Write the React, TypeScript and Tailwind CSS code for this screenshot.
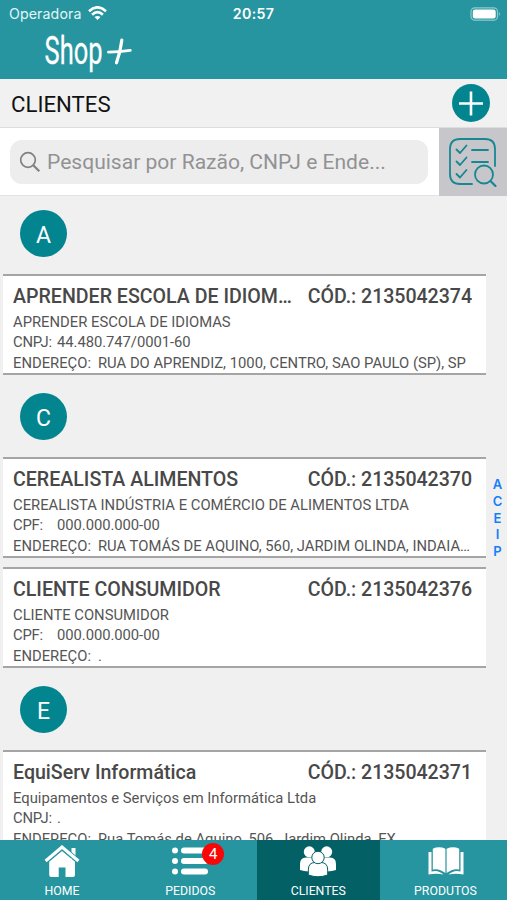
import React from "react";

type Client = {
  title: string;
  code: string;
  name: string;
  doc: string;
  docValue: string;
  address: string;
};

const aprender: Client = {
  title: "APRENDER ESCOLA DE IDIOM…",
  code: "2135042374",
  name: "APRENDER ESCOLA DE IDIOMAS",
  doc: "CNPJ:",
  docValue: "44.480.747/0001-60",
  address: "RUA DO APRENDIZ, 1000, CENTRO, SAO PAULO (SP), SP",
};
const cerealista: Client = {
  title: "CEREALISTA ALIMENTOS",
  code: "2135042370",
  name: "CEREALISTA INDÚSTRIA E COMÉRCIO DE ALIMENTOS LTDA",
  doc: "CPF:",
  docValue: "000.000.000-00",
  address: "RUA TOMÁS DE AQUINO, 560, JARDIM OLINDA, INDAIA…",
};
const consumidor: Client = {
  title: "CLIENTE CONSUMIDOR",
  code: "2135042376",
  name: "CLIENTE CONSUMIDOR",
  doc: "CPF:",
  docValue: "000.000.000-00",
  address: ".",
};
const equiserv: Client = {
  title: "EquiServ Informática",
  code: "2135042371",
  name: "Equipamentos e Serviços em Informática Ltda",
  doc: "CNPJ:",
  docValue: ".",
  address: "Rua Tomás de Aquino, 506, Jardim Olinda, EX",
};

function Card({ c }: { c: Client }) {
  return (
    <article className="ml-[3px] h-[101px] w-[483px] shrink-0 overflow-hidden border-y-2 border-[#a5a5a5] bg-white pl-[10px] pr-[14px] text-[#555]">
      <div className="mt-[7px] flex h-[27px] items-center justify-between text-[19.6px] font-medium leading-[27px] text-[#484848]">
        <h2 className="whitespace-nowrap">{c.title}</h2>
        <span className="whitespace-nowrap tracking-[-0.04px]">CÓD.: {c.code}</span>
      </div>
      <div className="mt-[2px] text-[14.8px]">
        <p className="whitespace-nowrap leading-[20px]">{c.name}</p>
        <p className="flex leading-[20px]">
          <span className="w-[44px] tracking-[-0.2px]">{c.doc}</span>
          <span className="tracking-[-0.05px]">{c.docValue}</span>
        </p>
        <p className="flex whitespace-nowrap leading-[23px]">
          <span className="w-[85px] shrink-0">ENDEREÇO:</span>
          <span>{c.address}</span>
        </p>
      </div>
    </article>
  );
}

function SectionHeader({ letter }: { letter: string }) {
  return (
    <div className="ml-[20px] flex size-[47px] shrink-0 items-center justify-center rounded-full bg-[#03858f] pt-[3px] text-[23px] leading-none text-white">
      {letter}
    </div>
  );
}

function HomeIcon() {
  return (
    <svg className="h-[32px] w-[36px]" viewBox="0 0 36 32">
      <path d="M27.5 3H31.5V14H27.5Z" fill="#fff" />
      <path d="M18 6L5.2 16.8V30Q5.2 32 7.2 32H14.7V22.5H21.5V32H29Q31 32 31 30V16.8Z" fill="#fff" />
      <path d="M1.6 16L18 2L34.4 16" fill="none" stroke="#2695a0" strokeWidth="4.8" />
      <path d="M1.6 16L18 2L34.4 16" fill="none" stroke="#fff" strokeWidth="3.1" />
    </svg>
  );
}

function OrdersIcon() {
  return (
    <svg className="h-[28px] w-[36px]" viewBox="0 0 36 28" fill="#fff">
      <circle cx="3" cy="3.5" r="3" />
      <circle cx="3" cy="14" r="3" />
      <circle cx="3" cy="24.5" r="3" />
      <rect x="9" y="0.5" width="27" height="6" rx="3" />
      <rect x="9" y="11" width="27" height="6" rx="3" />
      <rect x="9" y="21.5" width="27" height="6" rx="3" />
    </svg>
  );
}

function ClientsIcon() {
  return (
    <svg className="h-[31px] w-[36px]" viewBox="0 0 36 31" fill="#fff" stroke="#036166" strokeWidth="1">
      <g stroke="none">
        <circle cx="9.3" cy="5.8" r="5.5" />
        <circle cx="26.7" cy="5.8" r="5.5" />
        <path d="M0 24 V18 Q0 11.5 6 11.5 H12 L17 24.5 Q7 26.5 0 24Z" />
        <path d="M36 24 V18 Q36 11.5 30 11.5 H24 L19 24.5 Q29 26.5 36 24Z" />
      </g>
      <path d="M8.3 29 V24 Q8.3 16.5 15 16.5 H21 Q27.7 16.5 27.7 24 V29 Q18 32.5 8.3 29Z" />
      <circle cx="18" cy="11.5" r="6.2" />
    </svg>
  );
}

function ProductsIcon() {
  return (
    <svg className="h-[28px] w-[36px]" viewBox="0 0 36 28" fill="#fff">
      <path d="M4.8 1.7 Q11 -1 17.4 1.7 V26 Q11 21 4.8 22.5Z" />
      <path d="M31.2 1.7 Q25 -1 18.6 1.7 V26 Q25 21 31.2 22.5Z" />
      <path d="M.5 5 H3.5 V24.5 Q10 22.5 15.5 27.5 Q8 26 .5 27.5Z" />
      <path d="M35.5 5 H32.5 V24.5 Q26 22.5 20.5 27.5 Q28 26 35.5 27.5Z" />
    </svg>
  );
}

function Tab({ label, active, children }: { label: string; active?: boolean; children: React.ReactNode }) {
  return (
    <div className={`flex flex-col items-center text-white ${active ? "bg-[#036166]" : ""}`}>
      <div className="flex h-[43px] items-center pb-px">{children}</div>
      <span className="mt-px text-[12.3px] leading-[15px]">{label}</span>
    </div>
  );
}

export default function App() {
  return (
    <div className="flex h-[900px] w-[507px] flex-col overflow-hidden bg-[#f0f0f0] font-[Roboto,sans-serif]">
      <header className="h-[79px] shrink-0 bg-[#2695a0] text-white">
        <div className="grid h-[27px] grid-cols-[1fr_60px_1fr] items-center pl-[9px] pr-[6px] font-[Inter,sans-serif] text-[14.2px]">
          <div className="flex items-center gap-[6px]">
            <span className="tracking-[0.1px] text-[#e2f5f6]">Operadora</span>
            <svg className="h-[14px] w-[19px]" viewBox="0 0 19 14" fill="none" stroke="#fff" strokeWidth="2.6">
              <path d="M1 5.2 Q9.5 -2.6 18 5.2" />
              <path d="M4.1 8.7 Q9.5 3.6 14.9 8.7" />
              <path d="M9.5 14 L6.5 11 Q9.5 8.8 12.5 11Z" fill="#fff" stroke="none" />
            </svg>
          </div>
          <span className="-ml-[3px] text-center font-semibold tracking-[0.3px]">20:57</span>
          <svg className="h-[14px] w-[31px] justify-self-end" viewBox="0 0 31 14">
            <rect x="1" y=".8" width="26.5" height="12.4" rx="3.8" fill="none" stroke="#8ccbd0" strokeWidth="1.2" />
            <rect x="2.8" y="2.6" width="22.9" height="8.8" rx="2.2" fill="#fff" />
            <path d="M29 5 Q31 7 29 9Z" fill="#8ccbd0" />
          </svg>
        </div>
        <svg className="mt-px ml-[40px] h-[46px] w-[100px]" viewBox="40 28 100 46">
          <text x="44.5" y="63.5" fontSize="39.5" fontFamily="Roboto" fill="#fff" stroke="#fff" strokeWidth=".3" textLength="58" lengthAdjust="spacingAndGlyphs">
            Shop
          </text>
          <g fill="none" stroke="#fff" strokeLinecap="round">
            <path d="M108.5 52.2Q119 52 130.3 50.4" strokeWidth="2.8" />
            <path d="M121.8 40.2Q120.5 51.5 116.5 62.8" strokeWidth="3.2" />
          </g>
        </svg>
      </header>

      <section className="flex h-[49px] shrink-0 items-center justify-between border-b border-[#dedede] bg-[#f1f1f1] pl-[11px] pr-[17px]">
        <h1 className="pt-[4px] text-[22.2px] text-[#111]">CLIENTES</h1>
        <svg className="size-[38px]" viewBox="0 0 38 38">
          <circle cx="19" cy="19" r="19" fill="#03858f" />
          <path d="M7 19.5H31M19 7.5V31.5" stroke="#fff" strokeWidth="2.6" />
        </svg>
      </section>

      <section className="flex h-[68px] shrink-0 bg-white">
        <div className="flex flex-1 items-center border-b border-[#e2e2e2] pl-[10px] pr-[11px]">
          <div className="flex h-[44px] w-full items-center rounded-[12px] bg-[#ededed] pl-[9px] text-[#929294]">
            <svg className="size-[22px]" viewBox="0 0 22 22" fill="none" stroke="#818184" strokeWidth="1.7">
              <circle cx="9" cy="9" r="7.3" />
              <path d="M14.3 14.3L20.3 20.3" strokeWidth="2.2" />
            </svg>
            <span className="ml-[6px] mt-px whitespace-nowrap text-[21.05px]">Pesquisar por Razão, CNPJ e Ende...</span>
          </div>
        </div>
        <div className="flex w-[68px] items-center justify-center bg-[#c6c6cb]">
          <svg className="size-[50px]" viewBox="0 0 50 50" fill="none" stroke="#178791" strokeWidth="1.8" strokeLinecap="round" strokeLinejoin="round">
            <path d="M24 47H12Q2 47 2 37V12Q2 2 12 2H37Q47 2 47 12V29" />
            <path d="M8.5 12.5L12 16L18.5 8.5M8.5 24.5L12 28L18.5 20.5M8.5 37L12 40.5L18.5 33" />
            <path d="M24 13H40M24 25H40" />
            <circle cx="36" cy="37.5" r="9" />
            <path d="M42.5 44L47.5 49" strokeWidth="2.2" />
          </svg>
        </div>
      </section>

      <main className="relative flex min-h-0 flex-1 flex-col overflow-hidden pt-[14px]">
        <SectionHeader letter="A" />
        <div className="h-[17px] shrink-0" />
        <Card c={aprender} />
        <div className="h-[18px] shrink-0" />
        <SectionHeader letter="C" />
        <div className="h-[17px] shrink-0" />
        <Card c={cerealista} />
        <div className="h-[9px] shrink-0" />
        <Card c={consumidor} />
        <div className="h-[18px] shrink-0" />
        <SectionHeader letter="E" />
        <div className="h-[17px] shrink-0" />
        <Card c={equiserv} />
        <nav className="absolute right-[2px] top-[280px] flex w-[15px] flex-col items-center font-[Inter,sans-serif] text-[13px] font-semibold leading-[16.8px] text-[#147efb]">
          {["A", "C", "E", "I", "P"].map((l) => (
            <span key={l}>{l}</span>
          ))}
        </nav>
      </main>

      <footer className="grid h-[60px] shrink-0 grid-cols-[124px_132.5px_123.5px_131px] overflow-hidden bg-[#2695a0]">
        <Tab label="HOME">
          <HomeIcon />
        </Tab>
        <Tab label="PEDIDOS">
          <div className="relative">
            <OrdersIcon />
            <span className="absolute left-[30px] top-[-4px] flex size-[22px] items-center justify-center rounded-full bg-[#f90606] text-[15px] leading-none">
              4
            </span>
          </div>
        </Tab>
        <Tab label="CLIENTES" active>
          <ClientsIcon />
        </Tab>
        <Tab label="PRODUTOS">
          <ProductsIcon />
        </Tab>
      </footer>
    </div>
  );
}
